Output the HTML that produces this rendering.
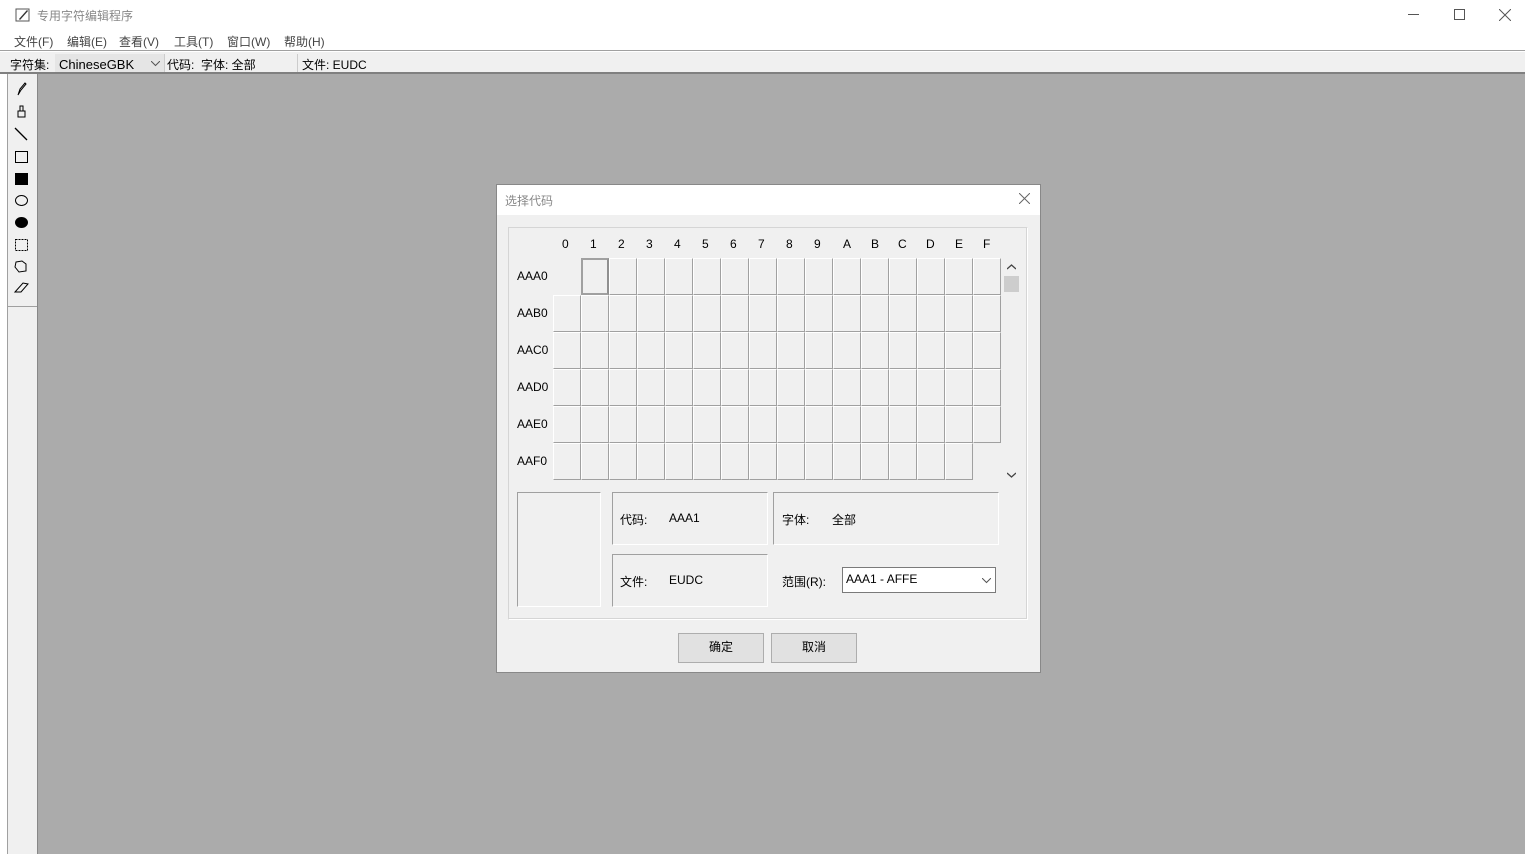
<!DOCTYPE html>
<html><head><meta charset="utf-8"><style>
*{margin:0;padding:0;box-sizing:border-box}
body{width:1525px;height:854px;position:relative;overflow:hidden;background:#fff;font-family:"Liberation Sans","Noto Sans CJK SC",sans-serif;font-size:12px;color:#000}
.a{position:absolute}
.t{white-space:nowrap}
.grid{position:absolute;left:553px;top:258px;display:grid;grid-template-columns:repeat(16,28px);grid-template-rows:repeat(6,37px)}
.grid div{background:#f0f0f0;border-left:1px solid #fff;border-top:1px solid #fff;border-right:1px solid #a0a0a0;border-bottom:1px solid #a0a0a0}
.grid div.e{background:none;border:none}
.grid div.s{border:2px solid #a0a0a0;border-right-color:#909090}
.box{position:absolute;border:1px solid #a0a0a0;border-right-color:#fff;border-bottom-color:#fff;background:#f0f0f0}
.btn{position:absolute;border:1px solid #adadad;background:#e1e1e1;text-align:center;line-height:27px}
</style></head><body>
<!-- title bar -->
<svg class="a" style="left:15px;top:7px" width="16" height="16" viewBox="0 0 16 16"><rect x="1" y="2" width="13" height="12" fill="#fff" stroke="#555"/><path d="M4 12 L12 3 L13 4 L5 13 Z" fill="#333"/></svg>
<div class="a t" style="left:37px;top:7px;color:#888;font-size:12px">专用字符编辑程序</div>
<div class="a" style="left:1408px;top:14px;width:11px;height:1px;background:#555"></div>
<div class="a" style="left:1454px;top:9px;width:11px;height:11px;border:1px solid #555"></div>
<svg class="a" style="left:1499px;top:9px" width="12" height="12"><path d="M0 0L12 12M12 0L0 12" stroke="#555"/></svg>
<!-- menu -->
<div class="a t" style="left:14px;top:33px;color:#444">文件(F)</div>
<div class="a t" style="left:67px;top:33px;color:#444">编辑(E)</div>
<div class="a t" style="left:119px;top:33px;color:#444">查看(V)</div>
<div class="a t" style="left:174px;top:33px;color:#444">工具(T)</div>
<div class="a t" style="left:227px;top:33px;color:#444">窗口(W)</div>
<div class="a t" style="left:284px;top:33px;color:#444">帮助(H)</div>
<div class="a" style="left:0;top:50px;width:1525px;height:1px;background:#a0a0a0"></div>
<!-- toolbar row -->
<div class="a" style="left:0;top:52px;width:1525px;height:21px;background:#f0f0f0"></div>
<div class="a t" style="left:10px;top:56px">字符集:</div>
<div class="a" style="left:55px;top:54px;width:110px;height:19px;background:#e5e5e5;border-right:1px solid #ccc"></div>
<div class="a t" style="left:59px;top:57px;font-size:13px">ChineseGBK</div>
<svg class="a" style="left:151px;top:61px" width="9" height="6"><path d="M0 0L4.5 4.5L9 0" fill="none" stroke="#555"/></svg>
<div class="a t" style="left:167px;top:56px">代码:&nbsp; 字体: 全部</div>
<div class="a" style="left:297px;top:54px;width:1px;height:19px;background:#ccc"></div>
<div class="a t" style="left:302px;top:56px">文件: EUDC</div>
<div class="a" style="left:0;top:72px;width:1525px;height:2px;background:#808080"></div>
<!-- left -->
<div class="a" style="left:7px;top:74px;width:1px;height:780px;background:#a0a0a0"></div>
<div class="a" style="left:8px;top:74px;width:30px;height:780px;background:#f0f0f0"></div>
<div class="a" style="left:8px;top:306px;width:30px;height:1px;background:#a0a0a0"></div>
<div class="a" style="left:37px;top:74px;width:1px;height:780px;background:#888"></div>
<svg class="a" style="left:12px;top:80px" width="20" height="220">
<path d="M6 15L8 9L13 3L14 4L9 10Z" fill="none" stroke="#000"/>
<path d="M8 26h3v5h-3z M6 31h7v6h-7z" fill="none" stroke="#000"/>
<path d="M3 48L15 60" stroke="#000" stroke-width="1.3"/>
<rect x="3.5" y="71.5" width="12" height="11" fill="none" stroke="#000"/>
<rect x="3" y="93" width="13" height="12" fill="#000"/>
<ellipse cx="9.5" cy="120.5" rx="6" ry="5" fill="none" stroke="#000"/>
<ellipse cx="9.5" cy="142.5" rx="6.5" ry="5.5" fill="#000"/>
<rect x="3.5" y="159.5" width="12" height="11" fill="none" stroke="#000" stroke-dasharray="2,1"/>
<path d="M4 182L10 181L14 184L14 191L7 192L3 187Z" fill="none" stroke="#000"/>
<path d="M3 212L11 203L16 204L9 212Z M3 212L8 212" fill="none" stroke="#000"/>
</svg>
<div class="a" style="left:38px;top:74px;width:1487px;height:780px;background:#ababab"></div>
<!-- dialog -->
<div class="a" style="left:496px;top:184px;width:545px;height:489px;background:#f0f0f0;border:1px solid #888"></div>
<div class="a" style="left:497px;top:185px;width:543px;height:30px;background:#fff"></div>
<div class="a t" style="left:505px;top:192px;color:#888">选择代码</div>
<svg class="a" style="left:1019px;top:193px" width="11" height="11"><path d="M0 0L11 11M11 0L0 11" stroke="#666"/></svg>
<div class="a" style="left:508px;top:227px;width:520px;height:393px;border:1px solid #d5d5d5;border-right-color:#fff;border-bottom-color:#fff"></div>
<div class="a" style="left:509px;top:228px;width:518px;height:391px;border-right:1px solid #d5d5d5;border-bottom:1px solid #d5d5d5"></div>
<div class="a t" style="left:562px;top:237px;letter-spacing:0">0</div>
<div class="a t" style="left:590px;top:237px">1</div>
<div class="a t" style="left:618px;top:237px">2</div>
<div class="a t" style="left:646px;top:237px">3</div>
<div class="a t" style="left:674px;top:237px">4</div>
<div class="a t" style="left:702px;top:237px">5</div>
<div class="a t" style="left:730px;top:237px">6</div>
<div class="a t" style="left:758px;top:237px">7</div>
<div class="a t" style="left:786px;top:237px">8</div>
<div class="a t" style="left:814px;top:237px">9</div>
<div class="a t" style="left:843px;top:237px">A</div>
<div class="a t" style="left:871px;top:237px">B</div>
<div class="a t" style="left:898px;top:237px">C</div>
<div class="a t" style="left:926px;top:237px">D</div>
<div class="a t" style="left:955px;top:237px">E</div>
<div class="a t" style="left:983px;top:237px">F</div>
<div class="a t" style="left:517px;top:269px">AAA0</div>
<div class="a t" style="left:517px;top:306px">AAB0</div>
<div class="a t" style="left:517px;top:343px">AAC0</div>
<div class="a t" style="left:517px;top:380px">AAD0</div>
<div class="a t" style="left:517px;top:417px">AAE0</div>
<div class="a t" style="left:517px;top:454px">AAF0</div>
<div class="grid">
<div class="e"></div><div class="s"></div><div></div><div></div><div></div><div></div><div></div><div></div><div></div><div></div><div></div><div></div><div></div><div></div><div></div><div></div>
<div></div><div></div><div></div><div></div><div></div><div></div><div></div><div></div><div></div><div></div><div></div><div></div><div></div><div></div><div></div><div></div>
<div></div><div></div><div></div><div></div><div></div><div></div><div></div><div></div><div></div><div></div><div></div><div></div><div></div><div></div><div></div><div></div>
<div></div><div></div><div></div><div></div><div></div><div></div><div></div><div></div><div></div><div></div><div></div><div></div><div></div><div></div><div></div><div></div>
<div></div><div></div><div></div><div></div><div></div><div></div><div></div><div></div><div></div><div></div><div></div><div></div><div></div><div></div><div></div><div></div>
<div></div><div></div><div></div><div></div><div></div><div></div><div></div><div></div><div></div><div></div><div></div><div></div><div></div><div></div><div></div><div class="e"></div>
</div>
<svg class="a" style="left:1007px;top:264px" width="9" height="6"><path d="M0 5L4.5 1L9 5" fill="none" stroke="#444" stroke-width="1.3"/></svg>
<div class="a" style="left:1004px;top:276px;width:15px;height:16px;background:#cdcdcd"></div>
<svg class="a" style="left:1007px;top:472px" width="9" height="6"><path d="M0 1L4.5 5L9 1" fill="none" stroke="#444" stroke-width="1.3"/></svg>
<div class="box" style="left:517px;top:492px;width:84px;height:115px"></div>
<div class="box" style="left:612px;top:492px;width:156px;height:53px"></div>
<div class="box" style="left:773px;top:492px;width:226px;height:53px"></div>
<div class="box" style="left:612px;top:554px;width:156px;height:53px"></div>
<div class="a t" style="left:620px;top:511px">代码:</div>
<div class="a t" style="left:669px;top:511px">AAA1</div>
<div class="a t" style="left:782px;top:511px">字体:</div>
<div class="a t" style="left:832px;top:511px">全部</div>
<div class="a t" style="left:620px;top:573px">文件:</div>
<div class="a t" style="left:669px;top:573px">EUDC</div>
<div class="a t" style="left:782px;top:573px">范围(R):</div>
<div class="a" style="left:842px;top:567px;width:154px;height:26px;background:#fff;border:1px solid #7a7a7a"></div>
<div class="a t" style="left:846px;top:572px">AAA1 - AFFE</div>
<svg class="a" style="left:982px;top:578px" width="9" height="6"><path d="M0 0L4.5 4.5L9 0" fill="none" stroke="#555"/></svg>
<div class="btn" style="left:678px;top:633px;width:86px;height:30px">确定</div>
<div class="btn" style="left:771px;top:633px;width:86px;height:30px">取消</div>
</body></html>
